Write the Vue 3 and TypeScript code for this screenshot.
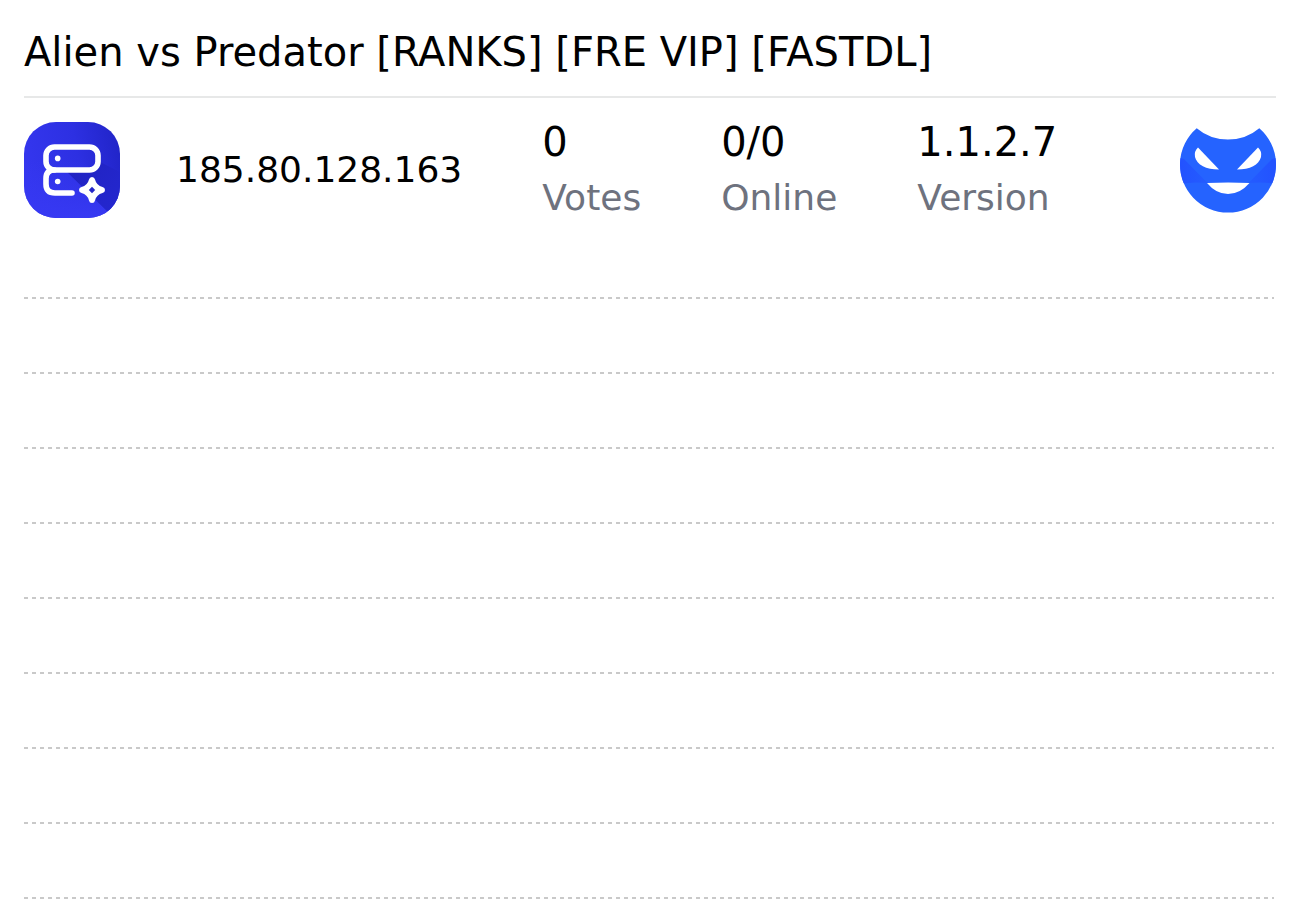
<script setup lang="ts">
interface Stat {
  value: string
  label: string
}

const title = 'Alien vs Predator [RANKS] [FRE VIP] [FASTDL]'
const address = '185.80.128.163'
const stats: Stat[] = [
  { value: '0', label: 'Votes' },
  { value: '0/0', label: 'Online' },
  { value: '1.1.2.7', label: 'Version' },
]
const lineCount = 9
</script>

<template>
  <main class="page">
    <h1 class="title">{{ title }}</h1>
    <section class="server">
      <svg class="icon" viewBox="0 0 96 96" role="img" aria-label="Server">
        <defs>
          <linearGradient id="tile" x1="0" y1="0.4" x2="1" y2="0.2">
            <stop offset="0" stop-color="#3436ee" />
            <stop offset="0.55" stop-color="#2d30e2" />
            <stop offset="1" stop-color="#2124c8" />
          </linearGradient>
          <linearGradient id="glow" x1="0" y1="0" x2="0" y2="1">
            <stop offset="0.4" stop-color="#3739f3" stop-opacity="0" />
            <stop offset="1" stop-color="#3739f3" />
          </linearGradient>
          <linearGradient id="shade" x1="0" y1="0" x2="1" y2="0.8">
            <stop offset="0" stop-color="#2022c0" />
            <stop offset="1" stop-color="#2427cf" />
          </linearGradient>
          <clipPath id="tile-shape"><rect width="96" height="96" rx="32" /></clipPath>
        </defs>
        <g clip-path="url(#tile-shape)">
          <rect width="96" height="96" fill="url(#tile)" />
          <path d="M0 0 H20 L96 76 V96 H0 Z" fill="url(#glow)" />
          <path d="M41 48 H70 L76 40 L96 50 V96 H90 Z" fill="url(#shade)" />
        </g>
        <g fill="none" stroke="#fff" stroke-width="5.6" stroke-linecap="round">
          <rect x="22" y="25" width="52" height="23" rx="8.5" />
          <path d="M30.500 48 Q22 48 22 56.500 V62 Q22 71 31 71 H48" />
        </g>
        <circle cx="33.700" cy="36.400" r="2.800" fill="#fff" />
        <circle cx="33.700" cy="59.500" r="2.800" fill="#fff" />
        <path d="M68 55 Q70.500 55 71 57.500 Q72.500 63.500 78.500 65 Q81 65.700 81 68 Q81 70.300 78.500 71 Q72.500 72.500 71 78.500 Q70.500 81 68 81 Q65.500 81 65 78.500 Q63.500 72.500 57.500 71 Q55 70.300 55 68 Q55 65.700 57.500 65 Q63.500 63.500 65 57.500 Q65.500 55 68 55 Z" fill="#fff" />
        <path d="M68 64.800 L71.200 68 L68 71.200 L64.800 68 Z" fill="#2426c8" />
      </svg>
      <span class="address">{{ address }}</span>
      <dl class="stats">
        <div v-for="stat in stats" :key="stat.label" class="stat">
          <dt class="label">{{ stat.label }}</dt>
          <dd class="value">{{ stat.value }}</dd>
        </div>
      </dl>
      <svg class="icon mask" viewBox="0 0 96 96" role="img" aria-label="Mask">
        <defs>
          <clipPath id="face"><circle cx="48" cy="42.700" r="48" /></clipPath>
          <linearGradient id="cheek-left" x1="0" y1="0" x2="1" y2="0">
            <stop offset="0" stop-color="#2352ff" />
            <stop offset="1" stop-color="#245cff" />
          </linearGradient>
          <linearGradient id="cheek-right" x1="1" y1="0" x2="0" y2="0">
            <stop offset="0" stop-color="#2352ff" />
            <stop offset="1" stop-color="#245cff" />
          </linearGradient>
        </defs>
        <path d="M16.700 6.200 A48 48 0 1 0 79.300 6.200 Q66 17.500 48 17.500 Q30 17.500 16.700 6.200 Z" fill="#2563ff" />
        <g clip-path="url(#face)">
          <path d="M0 36 L4 37 L27.500 61 Q12 59.500 0 62 Z" fill="url(#cheek-left)" />
          <path d="M96 36 L92 37 L68.500 61 Q84 59.500 96 62 Z" fill="url(#cheek-right)" />
        </g>
        <g fill="#fff">
          <path d="M18 25.500 L39 47.600 C26 47.500 17 43 15 35 Q14 29 18 25.500 Z" />
          <path d="M78 25.500 L57 47.600 C70 47.500 79 43 81 35 Q82 29 78 25.500 Z" />
          <path d="M27 61 Q48 60 69.500 61 Q60 72 48 72 Q36 72 27 61 Z" />
        </g>
      </svg>
    </section>
    <div class="lines">
      <div v-for="n in lineCount" :key="n" class="line"></div>
    </div>
  </main>
</template>

<style>
body {
  margin: 0;
  background: #fff;
}
</style>

<style scoped>
.page {
  padding: 24px 24px 0;
  font-family: "DejaVu Sans", sans-serif;
  color: #000;
}

.title {
  margin: 0;
  padding-bottom: 16px;
  border-bottom: 2px solid #e7e8e8;
  font-size: 40px;
  font-weight: 400;
  line-height: 56px;
}

.server {
  display: flex;
  align-items: center;
  height: 96px;
  margin-top: 24px;
}

.icon {
  flex: none;
  width: 96px;
  height: 96px;
}

.address {
  margin-left: 56px;
  font-size: 36px;
  line-height: 56px;
}

.stats {
  display: flex;
  gap: 80px;
  margin: 0 0 0 80px;
}

.stat {
  display: flex;
  flex-direction: column-reverse;
}

.label {
  color: #6e727e;
  font-size: 36px;
  line-height: 56px;
}

.value {
  margin: 0;
  font-size: 40px;
  line-height: 56px;
}

.mask {
  margin-left: auto;
}

.lines {
  padding-top: 6px;
  margin-right: 2px;
}

.line {
  height: 75px;
  background: repeating-linear-gradient(90deg, #c9c9c9 0 4px, transparent 4px 8px) left bottom / 100% 2px no-repeat;
}
</style>
